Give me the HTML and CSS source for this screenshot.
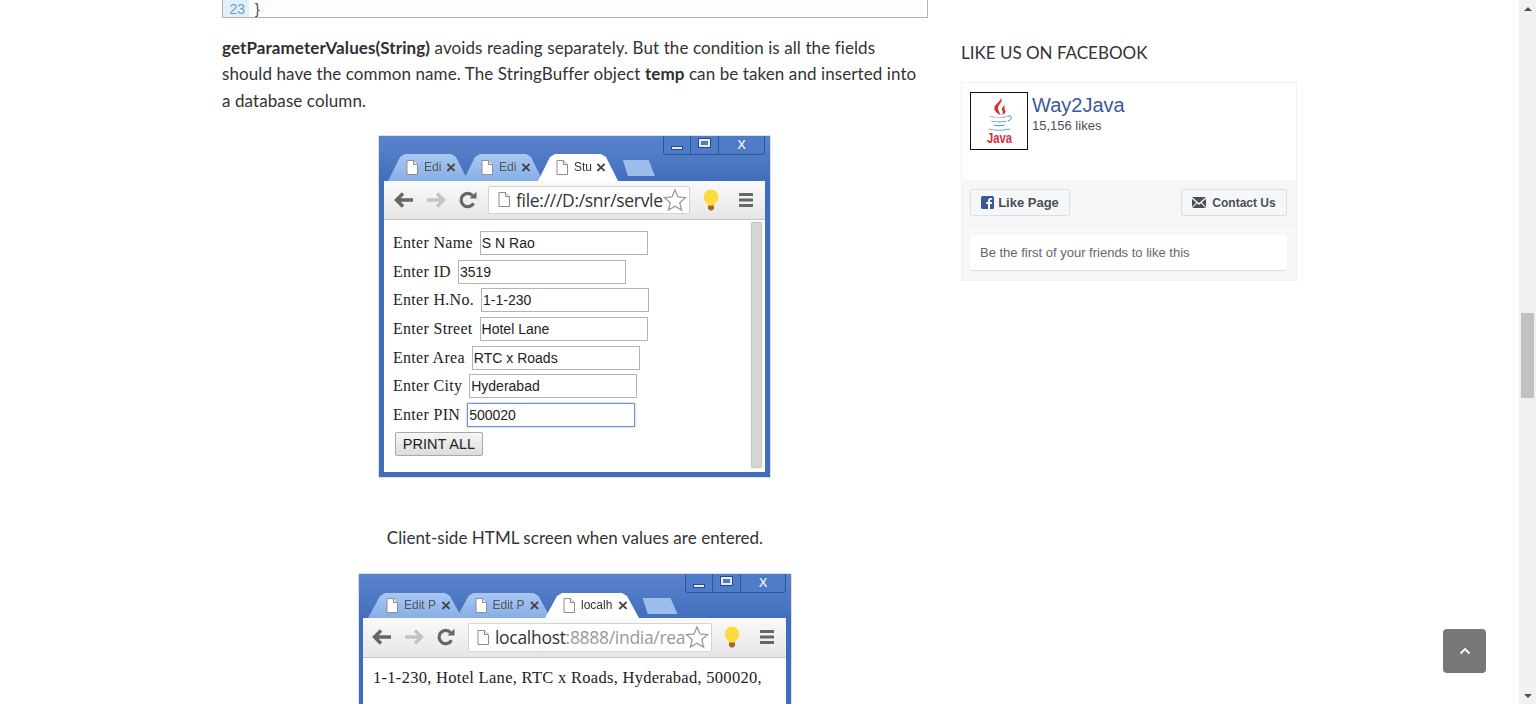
FILE: index.html
```html
<!DOCTYPE html>
<html lang="en">
<head>
    <meta charset="UTF-8">
    <meta name="viewport" content="width=device-width, initial-scale=1.0">
    <title>getParameterValues - Way2Java</title>
    <link rel="stylesheet" href="styles.css">
</head>
<body>
    <svg class="icon-defs" width="0" height="0">
        <symbol id="i-page" viewBox="0 0 12 15">
            <path d="M1 .5h6.5L11.5 4.5V14.5H1z" fill="#fff" stroke="#8d8d8d"/>
            <path d="M7.5 .5V4.5H11.5" fill="#eee" stroke="#8d8d8d"/>
        </symbol>
        <symbol id="i-arrow" viewBox="0 0 20 16">
            <path d="M9 1.5 2.5 8 9 14.500M3 8H19" fill="none" stroke="currentColor" stroke-width="3.400"/>
        </symbol>
        <symbol id="i-reload" viewBox="0 0 20 18">
            <path d="M15.500 12.200A6.600 6.600 0 1 1 14.600 4.600" fill="none" stroke="#666" stroke-width="3.200"/>
            <path d="M11.500 7.600H18.500V.8z" fill="#666"/>
        </symbol>
        <symbol id="i-star" viewBox="0 0 24 24">
            <path d="M12 2l3 7 7.500.7-5.700 5 1.800 7.400L12 18.200 5.400 22.100l1.800-7.400-5.700-5L9 9z" fill="#fff" stroke="#9a9a9a" stroke-width="1.300"/>
        </symbol>
        <symbol id="i-bulb" viewBox="0 0 18 22">
            <path d="M9 .5a7.500 7.500 0 0 0-4.800 13c1 1 1.500 2 1.500 3h6.600c0-1 .5-2 1.500-3A7.500 7.500 0 0 0 9 .5z" fill="#fbdc3a"/>
            <path d="M6 16.500h6v3L10.200 21.500H7.800L6 19.500z" fill="#a5662a"/>
        </symbol>
        <symbol id="i-menu" viewBox="0 0 18 16">
            <path d="M2 1h14v3H2zM2 6.500h14v3H2zM2 12h14v3H2z" fill="#666"/>
        </symbol>
    </svg>

    <div class="page">
        <div class="wrap">
            <main class="content">
                <div class="code-box">
                    <span class="line-no">23</span>
                    <span class="line-code">}</span>
                </div>

                <p class="text"><b>getParameterValues(String)</b> avoids reading separately. But the condition is all the fields should have the common name. The StringBuffer object <b>temp</b> can be taken and inserted into a database column.</p>

                <div class="browser browser-form">
                    <div class="win-buttons">
                        <span class="win-btn win-min"><i></i></span>
                        <span class="win-btn win-max"><i></i></span>
                        <span class="win-btn win-close">X</span>
                    </div>
                    <div class="tabstrip">
                        <div class="tab"><svg class="tab-icon"><use href="#i-page"/></svg><span class="tab-label">Edi</span><span class="tab-x">×</span></div>
                        <div class="tab"><svg class="tab-icon"><use href="#i-page"/></svg><span class="tab-label">Edi</span><span class="tab-x">×</span></div>
                        <div class="tab tab-active"><svg class="tab-icon"><use href="#i-page"/></svg><span class="tab-label">Stu</span><span class="tab-x">×</span></div>
                        <div class="tab-new"></div>
                    </div>
                    <div class="toolbar">
                        <svg class="tool-icon back"><use href="#i-arrow"/></svg>
                        <svg class="tool-icon forward"><use href="#i-arrow"/></svg>
                        <svg class="tool-icon"><use href="#i-reload"/></svg>
                        <div class="url">
                            <svg class="url-page"><use href="#i-page"/></svg>
                            <span class="url-text">file:///D:/snr/servle</span>
                            <svg class="url-star"><use href="#i-star"/></svg>
                        </div>
                        <svg class="bulb"><use href="#i-bulb"/></svg>
                        <svg class="menu"><use href="#i-menu"/></svg>
                    </div>
                    <div class="viewport form-view">
                        <div class="form-rows">
                            <div class="form-row"><span class="form-label">Enter Name</span><span class="form-input">S N Rao</span></div>
                            <div class="form-row"><span class="form-label">Enter ID</span><span class="form-input">3519</span></div>
                            <div class="form-row"><span class="form-label">Enter H.No.</span><span class="form-input">1-1-230</span></div>
                            <div class="form-row"><span class="form-label">Enter Street</span><span class="form-input">Hotel Lane</span></div>
                            <div class="form-row"><span class="form-label">Enter Area</span><span class="form-input">RTC x Roads</span></div>
                            <div class="form-row"><span class="form-label">Enter City</span><span class="form-input">Hyderabad</span></div>
                            <div class="form-row"><span class="form-label">Enter PIN</span><span class="form-input form-input-focus">500020</span></div>
                            <span class="form-submit">PRINT ALL</span>
                        </div>
                        <div class="mini-scroll"><div class="mini-thumb"></div></div>
                    </div>
                </div>

                <p class="caption">Client-side HTML screen when values are entered.</p>

                <div class="browser browser-result">
                    <div class="win-buttons">
                        <span class="win-btn win-min"><i></i></span>
                        <span class="win-btn win-max"><i></i></span>
                        <span class="win-btn win-close">X</span>
                    </div>
                    <div class="tabstrip">
                        <div class="tab"><svg class="tab-icon"><use href="#i-page"/></svg><span class="tab-label">Edit P</span><span class="tab-x">×</span></div>
                        <div class="tab"><svg class="tab-icon"><use href="#i-page"/></svg><span class="tab-label">Edit P</span><span class="tab-x">×</span></div>
                        <div class="tab tab-active"><svg class="tab-icon"><use href="#i-page"/></svg><span class="tab-label">localh</span><span class="tab-x">×</span></div>
                        <div class="tab-new"></div>
                    </div>
                    <div class="toolbar">
                        <svg class="tool-icon back"><use href="#i-arrow"/></svg>
                        <svg class="tool-icon forward"><use href="#i-arrow"/></svg>
                        <svg class="tool-icon"><use href="#i-reload"/></svg>
                        <div class="url">
                            <svg class="url-page"><use href="#i-page"/></svg>
                            <span class="url-text">localhost<span class="url-path">:8888/india/rea</span></span>
                            <svg class="url-star"><use href="#i-star"/></svg>
                        </div>
                        <svg class="bulb"><use href="#i-bulb"/></svg>
                        <svg class="menu"><use href="#i-menu"/></svg>
                    </div>
                    <div class="viewport result-view">1-1-230, Hotel Lane, RTC x Roads, Hyderabad, 500020,</div>
                </div>
            </main>

            <aside class="sidebar">
                <h3 class="side-title">Like us on Facebook</h3>
                <div class="fb-box">
                    <div class="fb-head">
                        <div class="fb-logo">
                            <svg width="56" height="56" viewBox="0 0 56 56">
                                <path d="M30 5c3 4-4 7-3 11 .5 2 2 4 2.500 6-4-2-7-4.500-6-8 .8-3 5.500-5 6.500-9z" fill="#d9322e"/>
                                <path d="M34 12c-3 2-4 4-2.500 6 .7 1 .5 2.500-.5 4 3-1 4-3 3-5-.6-1.500-.8-3.500 0-5z" fill="#d9322e"/>
                                <path d="M19 23c4 1.500 14 1.500 18 0 0 2.200-18 2.200-18 0zM20 27.500c4 1.300 12 1.300 16 0-1 2.500-15 2.500-16 0zM21.500 31.500c3 1 10 1 13 0-1 2.300-12 2.300-13 0zM17 35.500c6 1.800 16 1.800 23 0-3 2.800-20 2.800-23 0z" fill="#3a87c0"/>
                                <path d="M37 23c4-1 5 3 0 5" fill="none" stroke="#3a87c0"/>
                                <text class="fb-logo-text" x="28.500" y="50" text-anchor="middle" textLength="25" lengthAdjust="spacingAndGlyphs">Java</text>
                            </svg>
                        </div>
                        <div class="fb-name">
                            <a class="fb-page-name">Way2Java</a>
                            <span class="fb-likes">15,156 likes</span>
                        </div>
                    </div>
                    <div class="fb-actions">
                        <span class="fb-btn fb-btn-like">
                            <svg width="13" height="13" viewBox="0 0 13 13"><rect width="13" height="13" rx="1.500" fill="#3b5998"/><path d="M9 13V8h1.700l.3-2H9V4.800c0-.6.2-1 1-1h1.100V2.100C10.800 2 10.200 2 9.600 2 8 2 7 3 7 4.600V6H5.300v2H7v5z" fill="#fff"/></svg>
                            Like Page
                        </span>
                        <span class="fb-btn fb-btn-contact">
                            <svg width="14" height="11" viewBox="0 0 14 11"><path d="M0 0h14L7 6zM0 1.800V10l4.200-4.600zM14 1.800V10L9.800 5.400zM5 6.200 7 8l2-1.800 4.700 4.800H.3z" fill="#4b4f56"/></svg>
                            Contact Us
                        </span>
                    </div>
                    <div class="fb-friends">
                        <div class="fb-friends-card">Be the first of your friends to like this</div>
                    </div>
                </div>
            </aside>
        </div>

        <a class="to-top">
            <svg width="12" height="8" viewBox="0 0 12 8"><path d="M1.500 6.500 6 2l4.500 4.500" fill="none" stroke="#fff" stroke-width="1.800"/></svg>
        </a>
    </div>

    <div class="scrollbar">
        <span class="scroll-arrow scroll-up"></span>
        <div class="scroll-track"><div class="scroll-thumb"></div></div>
        <span class="scroll-arrow scroll-down"></span>
    </div>
</body>
</html>
```

FILE: styles.css
```css
* {
    box-sizing: border-box;
}

html, body {
    height: 100%;
}

body {
    margin: 0;
    height: 704px;
    overflow: hidden;
    display: flex;
    background-color: #fff;
    color: #333;
    font-family: Lato, "Open Sans", sans-serif;
}

.icon-defs {
    position: absolute;
}

.page {
    flex: 1;
    position: relative;
    overflow: hidden;
}

.wrap {
    display: flex;
    align-items: flex-start;
    padding-left: 222px;
}

.content {
    width: 706px;
    height: 704px;
    overflow: hidden;
    display: flex;
    flex-direction: column;
}

.sidebar {
    width: 336px;
    margin-left: 33px;
}

/* code block, only the last row is in view */
.code-box {
    display: flex;
    height: 18px;
    flex-shrink: 0;
    background-color: #fdfdfb;
    border: 1px solid #b5b5b5;
    border-top: none;
    font-family: "Liberation Sans", sans-serif;
    font-size: 14px;
    line-height: 19px;
}

.line-no {
    width: 26px;
    padding-right: 4px;
    text-align: right;
    background-color: #e0f0fb;
    color: #6a9fd0;
}

.line-code {
    padding-left: 6px;
    color: #444;
}

.text {
    margin: 17px 0 22px;
    font-size: 17px;
    line-height: 26.3px;
    letter-spacing: 0.09px;
    color: #333;
}

.text b {
    color: #2f2f2f;
}

.caption {
    margin: 48px 0 23px;
    font-size: 17px;
    line-height: 26px;
    letter-spacing: 0.04px;
    text-align: center;
}

/* browser window screenshots */
.browser {
    position: relative;
    flex-shrink: 0;
    align-self: center;
    padding: 0 5px 4px;
    background: linear-gradient(#5a84cc, #3f6cbb 50px);
    box-shadow: 0 0 1px #444;
    filter: blur(0.35px);
    font-family: "Liberation Sans", sans-serif;
}

.browser-form {
    width: 391px;
    height: 341px;
    margin-right: 1px;
}

.browser-result {
    width: 432px;
    height: 140px;
    padding: 0 5px 0 4px;
}

.win-buttons {
    position: absolute;
    top: 0;
    right: 5px;
    display: flex;
    height: 19px;
    background-color: #4f7cc8;
    border: 1px solid #2f5597;
    border-top: none;
    border-radius: 0 0 3px 3px;
}

.win-btn {
    display: flex;
    align-items: center;
    justify-content: center;
    border-left: 1px solid #2f5597;
    color: #dfe8f6;
    font-size: 13px;
    font-weight: bold;
    text-shadow: 0 0 1px #2b4a83;
}

.win-min {
    width: 26px;
    border-left: none;
}

.win-min i {
    display: block;
    width: 12px;
    height: 4px;
    margin-top: 7px;
    background-color: #e6ecf7;
    border: 1px solid #2b4a83;
}

.win-max {
    width: 28px;
}

.win-max i {
    display: block;
    width: 11px;
    height: 8px;
    margin-bottom: 3px;
    border: 2px solid #e6ecf7;
    outline: 1px solid #2b4a83;
}

.win-close {
    width: 46px;
}

.browser-result .win-close {
    width: 45px;
}

.tabstrip {
    display: flex;
    align-items: flex-end;
    height: 45px;
    padding-left: 4px;
}

.browser-result .tabstrip {
    height: 44px;
    padding-left: 5px;
}

.tab {
    display: flex;
    align-items: center;
    width: 80px;
    height: 27px;
    margin-right: -5px;
    padding-left: 18px;
    background: linear-gradient(#a9c8f2, #86aee6);
    clip-path: polygon(0 100%, 12px 3px, 17px 0, calc(100% - 17px) 0, calc(100% - 12px) 3px, 100% 100%);
    font-size: 12px;
    color: #555;
}

.browser-result .tab {
    width: 94px;
    height: 25px;
    margin-right: -5.5px;
}

.tab-active {
    position: relative;
    background: #fff;
    color: #333;
}

.tab-icon {
    width: 12px;
    height: 15px;
    flex-shrink: 0;
}

.tab-label {
    width: 22px;
    margin-left: 6px;
    overflow: hidden;
    white-space: nowrap;
}

.browser-result .tab-label {
    width: 37px;
}

.tab-x {
    font-size: 17px;
    font-weight: bold;
    line-height: 1;
    color: #444;
}

.tab-new {
    width: 32px;
    height: 16px;
    margin: 0 0 5px 10px;
    background-color: #9dbdec;
    clip-path: polygon(0 0, 80% 0, 100% 100%, 15% 100%);
}

.browser-result .tab-new {
    width: 35px;
    margin: 0 0 4px 9px;
}

.toolbar {
    display: flex;
    align-items: center;
    height: 39px;
    padding-left: 10px;
    background: linear-gradient(#fafafa, #e6e6e6);
    border-bottom: 1px solid #c4c4c4;
}

.browser-result .toolbar {
    height: 40px;
    padding-left: 9px;
}

.tool-icon {
    width: 20px;
    height: 18px;
    margin-right: 12px;
    flex-shrink: 0;
}

.back {
    color: #666;
}

.forward {
    color: #c3c3c3;
    transform: scaleX(-1);
}

.url {
    display: flex;
    align-items: center;
    width: 202px;
    height: 28px;
    margin-left: -2px;
    padding: 0 2px 0 9px;
    background-color: #fff;
    border: 1px solid #d3d3d3;
    border-radius: 2px;
}

.browser-result .url {
    width: 244px;
    height: 29px;
    margin-left: 0;
    padding-left: 8px;
}

.url-page {
    width: 12px;
    height: 15px;
    flex-shrink: 0;
}

.url-text {
    flex: 1;
    margin-left: 6px;
    overflow: hidden;
    white-space: nowrap;
    font-family: "Open Sans", sans-serif;
    font-size: 17.500px;
    letter-spacing: -0.3px;
    color: #333;
}

.url-path {
    color: #999;
}

.url-star {
    width: 24px;
    height: 24px;
    flex-shrink: 0;
}

.bulb {
    width: 18px;
    height: 22px;
    margin-left: 12px;
    flex-shrink: 0;
}

.browser-result .bulb {
    margin-left: 11px;
}

.menu {
    width: 18px;
    height: 16px;
    margin-left: 17px;
    flex-shrink: 0;
}

.viewport {
    background-color: #fff;
}

.form-view {
    display: flex;
    justify-content: space-between;
    height: 252px;
    padding: 11px 2px 0 9px;
}

.form-rows {
    display: flex;
    flex-direction: column;
    align-items: flex-start;
}

.form-row {
    display: flex;
    align-items: center;
    height: 24px;
    margin-bottom: 4.700px;
}

.form-label {
    margin-right: 7px;
    font-family: "Liberation Serif", serif;
    font-size: 16px;
    letter-spacing: 0.3px;
    color: #222;
}

.form-input {
    width: 168px;
    height: 24px;
    padding-left: 1px;
    border: 1px solid #b4b4b4;
    font-size: 14px;
    line-height: 22px;
    color: #222;
}

.form-input-focus {
    border: 1px solid #6d94db;
    box-shadow: 0 0 2px #8db0ea;
}

.form-submit {
    width: 88px;
    height: 24px;
    margin-left: 2px;
    background: linear-gradient(#f6f6f6, #dcdcdc);
    border: 1px solid #a8a8a8;
    border-radius: 2px;
    font-size: 14.500px;
    line-height: 22px;
    text-align: center;
    color: #222;
}

.mini-scroll {
    width: 13px;
    height: 248px;
    margin-top: -10px;
    padding: 1px;
    background-color: #f4f4f4;
}

.mini-thumb {
    height: 100%;
    background-color: #d6d6d6;
    border: 1px solid #c8c8c8;
    border-radius: 2px;
}

.result-view {
    height: 100%;
    padding: 9px 10px 0;
    font-family: "Liberation Serif", serif;
    font-size: 16.500px;
    line-height: 22px;
    letter-spacing: 0.29px;
    color: #222;
    white-space: nowrap;
}

/* sidebar */
.side-title {
    margin: 41px 0 17px;
    font-size: 17px;
    font-weight: normal;
    line-height: 24px;
    text-transform: uppercase;
    color: #333;
}

.fb-box {
    border: 1px solid #f1f1f1;
    font-family: "Liberation Sans", sans-serif;
}

.fb-head {
    display: flex;
    height: 97px;
    padding: 9px 8px 0;
}

.fb-logo {
    width: 58px;
    height: 58px;
    border: 1px solid #111;
}

.fb-logo svg {
    display: block;
}

.fb-logo-text {
    font-family: "Liberation Sans", sans-serif;
    font-size: 15px;
    font-weight: bold;
    fill: #d6303a;
}

.fb-name {
    display: flex;
    flex-direction: column;
    margin: 1px 0 0 4px;
}

.fb-page-name {
    font-size: 20px;
    line-height: 24px;
    color: #3b5998;
}

.fb-likes {
    font-size: 13px;
    line-height: 17px;
    color: #4b4f56;
}

.fb-actions {
    display: flex;
    justify-content: space-between;
    height: 46px;
    padding: 9px 9px 0 8px;
    background-color: #f6f7f9;
    border-bottom: 1px solid #eff0f2;
}

.fb-btn {
    display: flex;
    align-items: center;
    justify-content: center;
    gap: 4px;
    height: 27px;
    background-color: #f6f7f9;
    border: 1px solid #dcdee3;
    border-radius: 2px;
    font-weight: bold;
    color: #4b4f56;
}

.fb-btn-like {
    width: 100px;
    font-size: 13px;
}

.fb-btn-contact {
    width: 106px;
    gap: 6px;
    font-size: 12px;
}

.fb-friends {
    height: 54px;
    padding: 9px 9px 0 8px;
    background-color: #f6f7f9;
}

.fb-friends-card {
    height: 35px;
    padding-left: 10px;
    background-color: #fff;
    box-shadow: 0 1px 1px rgba(0, 0, 0, 0.1);
    border-radius: 2px;
    font-size: 13px;
    line-height: 35px;
    color: #616770;
}

.to-top {
    position: absolute;
    left: 1443px;
    top: 629px;
    display: flex;
    align-items: center;
    justify-content: center;
    width: 43px;
    height: 44px;
    background-color: #777;
    border-radius: 4px;
}

/* window scrollbar */
.scrollbar {
    display: flex;
    flex-direction: column;
    width: 17px;
    height: 704px;
    flex-shrink: 0;
    background-color: #f1f1f1;
}

.scroll-arrow {
    display: flex;
    align-items: center;
    justify-content: center;
    height: 17px;
    flex-shrink: 0;
}

.scroll-up::before,
.scroll-down::before {
    content: "";
    border-left: 4px solid transparent;
    border-right: 4px solid transparent;
}

.scroll-up::before {
    border-bottom: 4px solid #505050;
}

.scroll-down::before {
    border-top: 4px solid #505050;
}

.scroll-track {
    flex: 1;
    padding: 296px 2px 0;
}

.scroll-thumb {
    height: 85px;
    background-color: #c1c1c1;
}
```
